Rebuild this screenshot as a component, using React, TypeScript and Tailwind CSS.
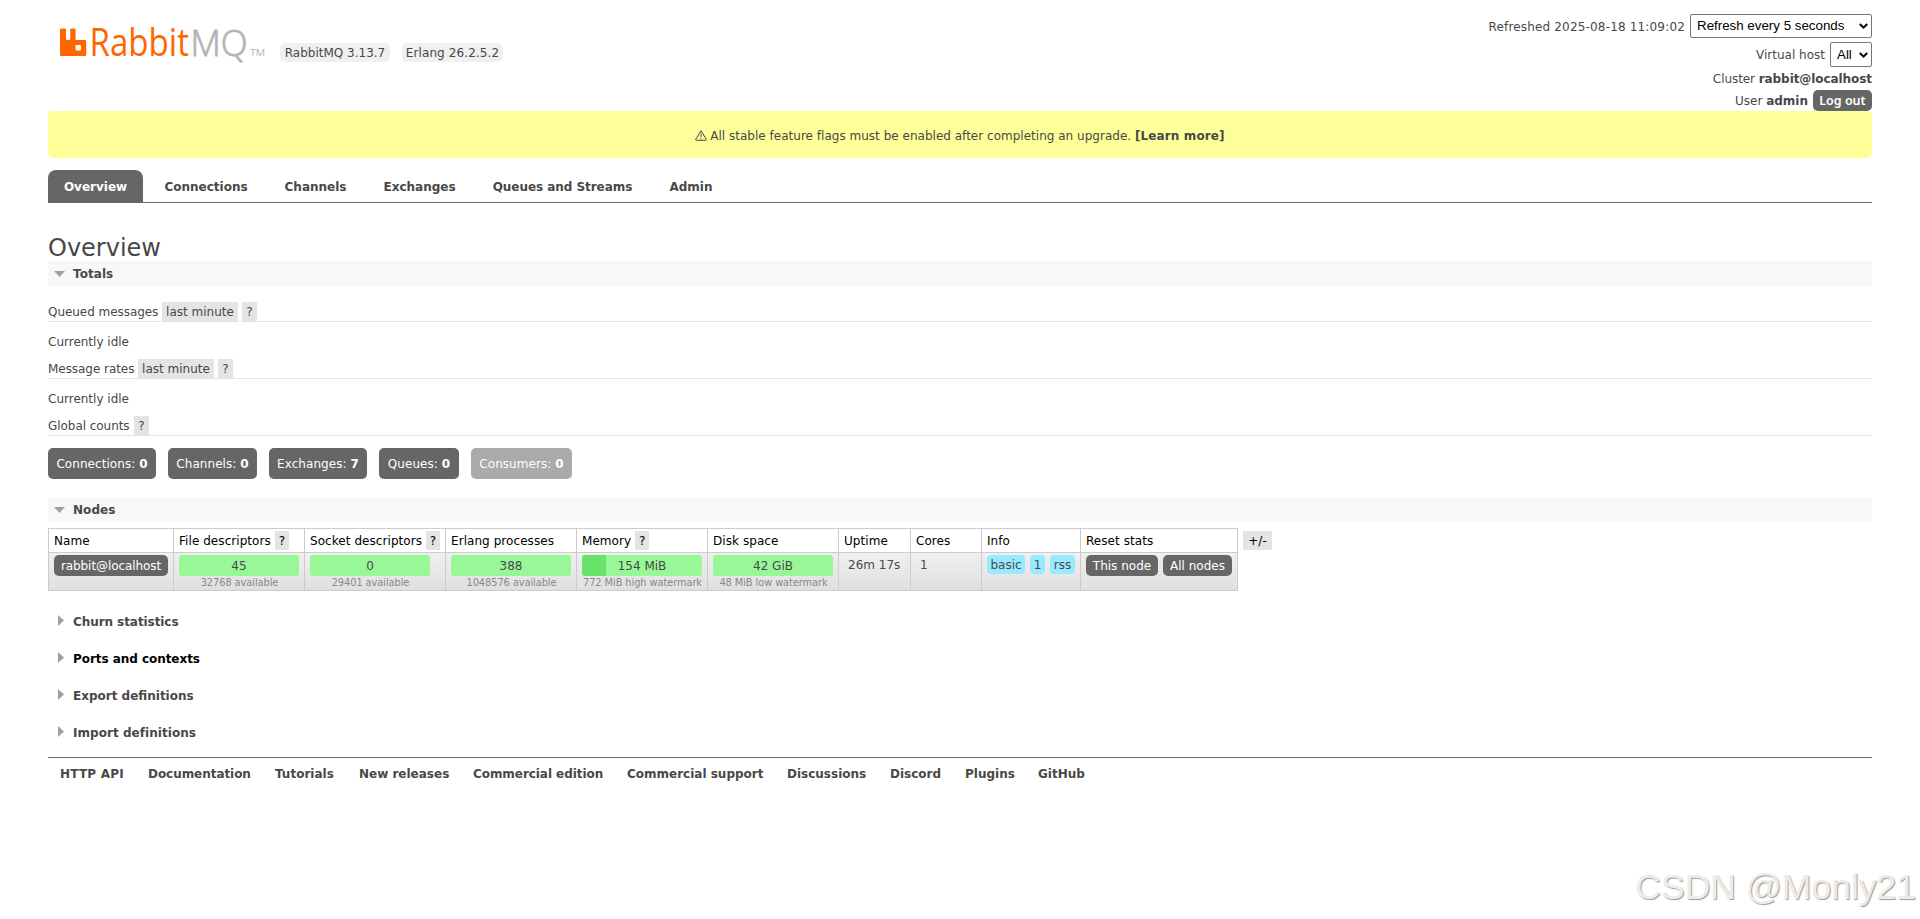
import React from "react";

const tabs = [
  { label: "Overview", cls: "w-[95px] mr-[6px] bg-[#666] text-white rounded-t-[8px]" },
  { label: "Connections", cls: "w-[114px] mr-[6px]" },
  { label: "Channels", cls: "w-[93px] mr-[6px]" },
  { label: "Exchanges", cls: "w-[103px] mr-[6px]" },
  { label: "Queues and Streams", cls: "w-[171px] mr-[6px] tracking-[-0.05px]" },
  { label: "Admin", cls: "w-[74px]" },
];

const counts = [
  { label: "Connections", value: 0, cls: "w-[108px] bg-[#666]" },
  { label: "Channels", value: 0, cls: "w-[89px] bg-[#666]" },
  { label: "Exchanges", value: 7, cls: "w-[98px] bg-[#666]" },
  { label: "Queues", value: 0, cls: "w-[80px] bg-[#666]" },
  { label: "Consumers", value: 0, cls: "w-[101px] bg-[#aaa]" },
];

const footerLinks = [
  { label: "HTTP API", cls: "w-[88px] tracking-[0.2px]" },
  { label: "Documentation", cls: "w-[127px] tracking-[-0.05px]" },
  { label: "Tutorials", cls: "w-[84px]" },
  { label: "New releases", cls: "w-[114px]" },
  { label: "Commercial edition", cls: "w-[154px] tracking-[-0.06px]" },
  { label: "Commercial support", cls: "w-[160px]" },
  { label: "Discussions", cls: "w-[103px]" },
  { label: "Discord", cls: "w-[75px]" },
  { label: "Plugins", cls: "w-[73px]" },
  { label: "GitHub", cls: "w-[60px]" },
];

function Chevron() {
  return (
    <svg className="pointer-events-none absolute right-[4px] top-1/2 -mt-[3px]" width="9" height="7" viewBox="0 0 9 7" fill="none">
      <path d="M.8 1 4.500 4.700 8.200 1" stroke="#000" strokeWidth="2" />
    </svg>
  );
}

function Picker({ label, cls }: { label: string; cls: string }) {
  return (
    <div className={`relative ml-[5px] flex tracking-normal ${cls}`}>
      <select className="h-full w-full appearance-none rounded-[2px] border border-[#767676] bg-white pl-[6px] font-['Liberation_Sans',sans-serif] text-[13.33px] leading-none text-black">
        <option>{label}</option>
      </select>
      <Chevron />
    </div>
  );
}

function Logo() {
  return (
    <svg className="overflow-visible" width="206" height="34" viewBox="0 0 206 34" fontFamily="'Open Sans', sans-serif">
      <path
        fill="#f60"
        fillRule="evenodd"
        d="M1.3 2.5h3.4a1.3 1.3 0 0 1 1.3 1.3v9.1a1.1 1.1 0 0 0 1.1 1.1h2a1.1 1.1 0 0 0 1.1-1.1V3.8a1.3 1.3 0 0 1 1.3-1.3h2.8a1.3 1.3 0 0 1 1.3 1.3v9.1a1.1 1.1 0 0 0 1.1 1.1h8.200a1.300 1.300 0 0 1 1.300 1.300v13.400a1.300 1.300 0 0 1-1.300 1.300H1.300A1.300 1.300 0 0 1 0 28.700V3.800A1.300 1.300 0 0 1 1.300 2.500ZM16.700 19a1.200 1.200 0 0 0-1.200 1.200v3.100a1.200 1.200 0 0 0 1.200 1.200h3.100a1.200 1.200 0 0 0 1.200-1.200v-3.100a1.200 1.200 0 0 0-1.200-1.200Z"
      />
      <text x="29.500" y="30" fontSize="37.500" fill="#f60" textLength="99.500" lengthAdjust="spacingAndGlyphs">Rabbit</text>
      <text x="130.500" y="30" fontSize="37.500" fontWeight="300" fill="#b4b4b4" stroke="#b4b4b4" strokeWidth="0.900" textLength="57" lengthAdjust="spacingAndGlyphs">MQ</text>
      <text x="190" y="30" fontSize="9.500" fill="#b4b4b4" textLength="15" lengthAdjust="spacingAndGlyphs">TM</text>
    </svg>
  );
}

function SectionBar({ children }: { children: React.ReactNode }) {
  return (
    <h2 className="flex h-[25px] items-center bg-[#f8f8f8] pl-[6px] pt-px text-[12px] font-bold leading-none tracking-[0.06px]">
      <svg className="mr-[8px]" width="11" height="6" viewBox="0 0 11 6"><path d="M0 0h11L5.500 6z" fill="#a0a0a0" /></svg>
      {children}
    </h2>
  );
}

function Collapsed({ children, cls }: { children: React.ReactNode; cls?: string }) {
  return (
    <h2 className={`flex h-[37px] items-center pl-[10px] pt-px text-[12px] font-bold leading-none ${cls ?? ""}`}>
      <svg className="mr-[9px] -mt-[4px]" width="6" height="11" viewBox="0 0 6 11"><path d="M0 0v11L6 5.500z" fill="#a0a0a0" /></svg>
      {children}
    </h2>
  );
}

function Tag({ children, cls }: { children: React.ReactNode; cls: string }) {
  return <span className={`flex h-[19px] items-center justify-center bg-[#e4e4e4] ${cls}`}>{children}</span>;
}

function Heading({ label, width, range, cls }: { label: string; width: string; range?: boolean; cls: string }) {
  return (
    <div className={`flex h-[20px] border-b border-[#e4e4e4] ${cls}`}>
      <span className={`flex items-center tracking-[-0.05px] ${width}`}>{label}</span>
      {range && <Tag cls="mr-[4px] w-[76px]">last minute</Tag>}
      <Tag cls="w-[15px]">?</Tag>
    </div>
  );
}

function Th({ label, w, help }: { label: string; w: string; help?: boolean }) {
  return (
    <th className={`h-[24px] border border-[#ccc] p-0 font-normal text-black ${w}`}>
      <div className="flex h-[22px] items-center pl-[5px]">
        <span className="whitespace-nowrap tracking-[0.06px]">{label}</span>
        {help && <Tag cls="ml-[4px] w-[14px]">?</Tag>}
      </div>
    </th>
  );
}

function Usage({ value, note, fill }: { value: string; note: string; fill?: string }) {
  return (
    <td className="border border-[#ccc] p-0 align-top">
      <div className="ml-[5px] mt-[2px] w-[120px]">
        <div className="flex h-[21px] items-center justify-center overflow-hidden rounded-[3px] bg-[#98f898]">
          <div className={`h-full self-start bg-[#6ae26a] ${fill ?? "w-0"}`} />
          <span className={fill ? "flex-1 pr-[24px] text-center" : ""}>{value}</span>
        </div>
        <div className="mt-[1px] h-[12px] whitespace-nowrap pl-px text-center text-[9.800px] leading-[12px] tracking-[-0.06px] text-[#888]">{note}</div>
      </div>
    </td>
  );
}

const dark = "flex h-[21px] items-center justify-center rounded-[5px] bg-[#666] text-white";
const info = "flex h-[19px] items-center justify-center rounded-[4px] bg-[#98ebff]";

export default function App() {
  return (
    <div className="relative flex h-[919px] w-full flex-col overflow-hidden bg-white px-[48px] font-['DejaVu_Sans',Verdana,sans-serif] text-[12px] leading-[16px] text-[#484848]">
      <header className="flex h-[111px] justify-between">
        <div className="flex pl-[12px] pt-[26px]">
          <Logo />
          <span className="ml-[14px] mt-[17px] flex h-[19px] w-[110px] items-center justify-center rounded-[5px] bg-[#f0f0f0]">RabbitMQ 3.13.7</span>
          <span className="ml-[12px] mt-[17px] flex h-[19px] w-[101px] items-center justify-center rounded-[5px] bg-[#f0f0f0] tracking-[0.1px]">Erlang 26.2.5.2</span>
        </div>
        <div className="flex flex-col items-end pt-[14px]">
          <div className="flex h-[24px] items-center pt-px tracking-[0.17px]">
            Refreshed 2025-08-18 11:09:02
            <Picker label="Refresh every 5 seconds" cls="-mt-px h-[24px] w-[182px]" />
          </div>
          <div className="mt-[4px] flex h-[25px] items-center">
            Virtual host
            <Picker label="All" cls="h-[25px] w-[42px]" />
          </div>
          <div className="mt-[3px] flex h-[18px] items-center tracking-[-0.07px]">Cluster&nbsp;<b>rabbit@localhost</b></div>
          <div className="mt-[2px] flex h-[21px] items-center">
            User&nbsp;<b>admin</b>
            <button className="ml-[5px] h-[21px] w-[59px] rounded-[5px] bg-[#666] font-['Noto_Sans',sans-serif] text-[12.500px] font-semibold text-white">Log out</button>
          </div>
        </div>
      </header>

      <div className="flex h-[47px] items-center justify-center rounded-[5px] bg-[#ffff99] pt-[2px]">
        <svg className="mr-[3px] -mt-[1px]" width="12" height="11" viewBox="0 0 12 11" fill="none" stroke="#484848">
          <path d="M6 .8 11.300 9.300q.2 1-.8 1h-9q-1 0-.8-1z" strokeLinejoin="round" />
          <path d="M6 3.500v3.500M6 8v1.200" />
        </svg>
        <span className="tracking-[0.015px]">All stable feature flags must be enabled after completing an upgrade.&nbsp;</span>
        <b className="tracking-[0.12px]">[Learn more]</b>
      </div>

      <nav className="mt-[12px] flex h-[33px] border-b border-[#666] font-bold">
        {tabs.map((t) => (
          <a key={t.label} className={`flex h-[33px] items-center justify-center whitespace-nowrap pt-[1px] ${t.cls}`}>{t.label}</a>
        ))}
      </nav>

      <h1 className="mt-[32px] h-[26px] text-[24px] leading-[27px]">Overview</h1>
      <SectionBar>Totals</SectionBar>
      <Heading cls="mt-[16px]" label="Queued messages" width="w-[114px]" range />
      <p className="mt-[12px] h-[16px]">Currently idle</p>
      <Heading cls="mt-[9px]" label="Message rates" width="w-[90px]" range />
      <p className="mt-[12px] h-[16px]">Currently idle</p>
      <Heading cls="mt-[9px]" label="Global counts" width="w-[86px]" />
      <div className="mb-[18px] mt-[12px] flex gap-[12px]">
        {counts.map((c) => (
          <div key={c.label} className={`flex h-[31px] items-center justify-center whitespace-nowrap rounded-[5px] tracking-[0.06px] text-white ${c.cls}`}>
            {c.label}:&nbsp;<b>{c.value}</b>
          </div>
        ))}
      </div>

      <SectionBar>Nodes</SectionBar>
      <div className="mt-[6px] flex">
        <table className="w-[1190px] table-fixed border-collapse">
          <thead>
            <tr>
              <Th label="Name" w="w-[125px]" />
              <Th label="File descriptors" w="w-[131px]" help />
              <Th label="Socket descriptors" w="w-[141px]" help />
              <Th label="Erlang processes" w="w-[131px]" />
              <Th label="Memory" w="w-[131px]" help />
              <Th label="Disk space" w="w-[131px]" />
              <Th label="Uptime" w="w-[72px]" />
              <Th label="Cores" w="w-[71px]" />
              <Th label="Info" w="w-[99px]" />
              <Th label="Reset stats" w="w-[157px]" />
            </tr>
          </thead>
          <tbody>
            <tr className="h-[38px] bg-linear-to-b from-[#f0f0f0] to-[#dfdfdf]">
              <td className="border border-[#ccc] p-0 align-top"><a className={`ml-[5px] mt-[2px] w-[114px] tracking-[-0.08px] ${dark}`}>rabbit@localhost</a></td>
              <Usage value="45" note="32768 available" />
              <Usage value="0" note="29401 available" />
              <Usage value="388" note="1048576 available" />
              <Usage value="154 MiB" note="772 MiB high watermark" fill="w-[24px]" />
              <Usage value="42 GiB" note="48 MiB low watermark" />
              <td className="border border-[#ccc] p-0 pl-[9px] pt-[4px] align-top">26m 17s</td>
              <td className="border border-[#ccc] p-0 pl-[9px] pt-[4px] align-top">1</td>
              <td className="border border-[#ccc] p-0 align-top">
                <div className="ml-[5px] mt-[2px] flex gap-[5px]">
                  <span className={`w-[38px] ${info}`}>basic</span>
                  <span className={`w-[15px] ${info}`}>1</span>
                  <span className={`w-[25px] ${info}`}>rss</span>
                </div>
              </td>
              <td className="border border-[#ccc] p-0 align-top">
                <div className="ml-[5px] mt-[2px] flex gap-[5px]">
                  <a className={`w-[72px] ${dark}`}>This node</a>
                  <a className={`w-[69px] ${dark}`}>All nodes</a>
                </div>
              </td>
            </tr>
          </tbody>
        </table>
        <Tag cls="ml-[5px] mt-[3px] w-[29px] text-black">+/-</Tag>
      </div>

      <div className="mt-[12px] flex flex-col">
        <Collapsed cls="tracking-[-0.07px]">Churn statistics</Collapsed>
        <Collapsed cls="tracking-[-0.05px] text-black">Ports and contexts</Collapsed>
        <Collapsed>Export definitions</Collapsed>
        <Collapsed cls="tracking-[0.05px]">Import definitions</Collapsed>
      </div>

      <footer className="mt-[6px] flex border-t border-[#666] pl-[12px] pt-[8px] font-bold">
        {footerLinks.map((l) => (
          <a key={l.label} className={`whitespace-nowrap ${l.cls}`}>{l.label}</a>
        ))}
      </footer>

      <div className="absolute bottom-[10px] right-[4px] whitespace-nowrap font-['Liberation_Sans',sans-serif] text-[35.500px] leading-[44px] text-[#ececec] [text-shadow:1px_1px_1px_#999]">
        CSDN @Monly21
      </div>
    </div>
  );
}
